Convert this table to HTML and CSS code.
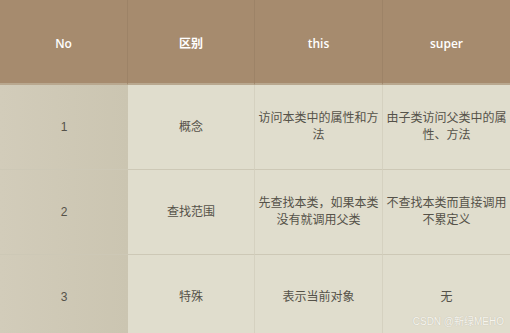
FILE: index.html
```html
<!DOCTYPE html>
<html lang="zh">
<head>
<meta charset="utf-8">
<link rel="stylesheet" href="styles.css">
</head>
<body>
<div class="page">
  <div class="table">
    <div class="cell head">No</div>
    <div class="cell head">区别</div>
    <div class="cell head">this</div>
    <div class="cell head last">super</div>

    <div class="cell first">1</div>
    <div class="cell">概念</div>
    <div class="cell">访问本类中的属性和方法</div>
    <div class="cell last">由子类访问父类中的属性、方法</div>

    <div class="cell first">2</div>
    <div class="cell">查找范围</div>
    <div class="cell">先查找本类，如果本类没有就调用父类</div>
    <div class="cell last">不查找本类而直接调用不累定义</div>

    <div class="cell first">3</div>
    <div class="cell">特殊</div>
    <div class="cell">表示当前对象</div>
    <div class="cell last">无</div>
  </div>
  <div class="mark">CSDN @新绿MEHO</div>
</div>
</body>
</html>
```
FILE: styles.css
```css
html, body {
  margin: 0;
  padding: 0;
  background: #e0ddcd;
}
.page {
  position: relative;
  width: 510px;
  height: 333px;
  overflow: hidden;
  font-family: "Liberation Sans", "Noto Sans CJK SC", sans-serif;
}
.table {
  display: grid;
  grid-template-columns: 128px 127px 128px 127px;
  grid-auto-rows: 85px;
}
.cell {
  display: flex;
  align-items: center;
  justify-content: center;
  text-align: center;
  font-size: 12px;
  line-height: 17px;
  color: #555249;
  background: #e0ddcd;
  border-right: 1px solid #d5d1c0;
  border-bottom: 1px solid #cdc8b6;
  box-sizing: border-box;
  padding: 0 1px;
}
.cell.last {
  border-right: none;
}
.cell.first {
  background: linear-gradient(to right, #d2ccba, #cbc5b1);
  border-right: none;
}
.head {
  background: #a68b6e;
  color: #ffffff;
  font-family: "Open Sans", "Noto Sans CJK SC", sans-serif;
  font-weight: 600;
  font-size: 12px;
  padding-top: 3px;
  border-right: 1px solid #9d8367;
  border-bottom: 2px solid #b9a88f;
}
.head.last {
  border-right: none;
}
.mark {
  position: absolute;
  right: 6px;
  bottom: 5px;
  font-size: 10px;
  color: #f7f5ee;
  text-shadow: 0 0 1px #b3afa2;
}
```
